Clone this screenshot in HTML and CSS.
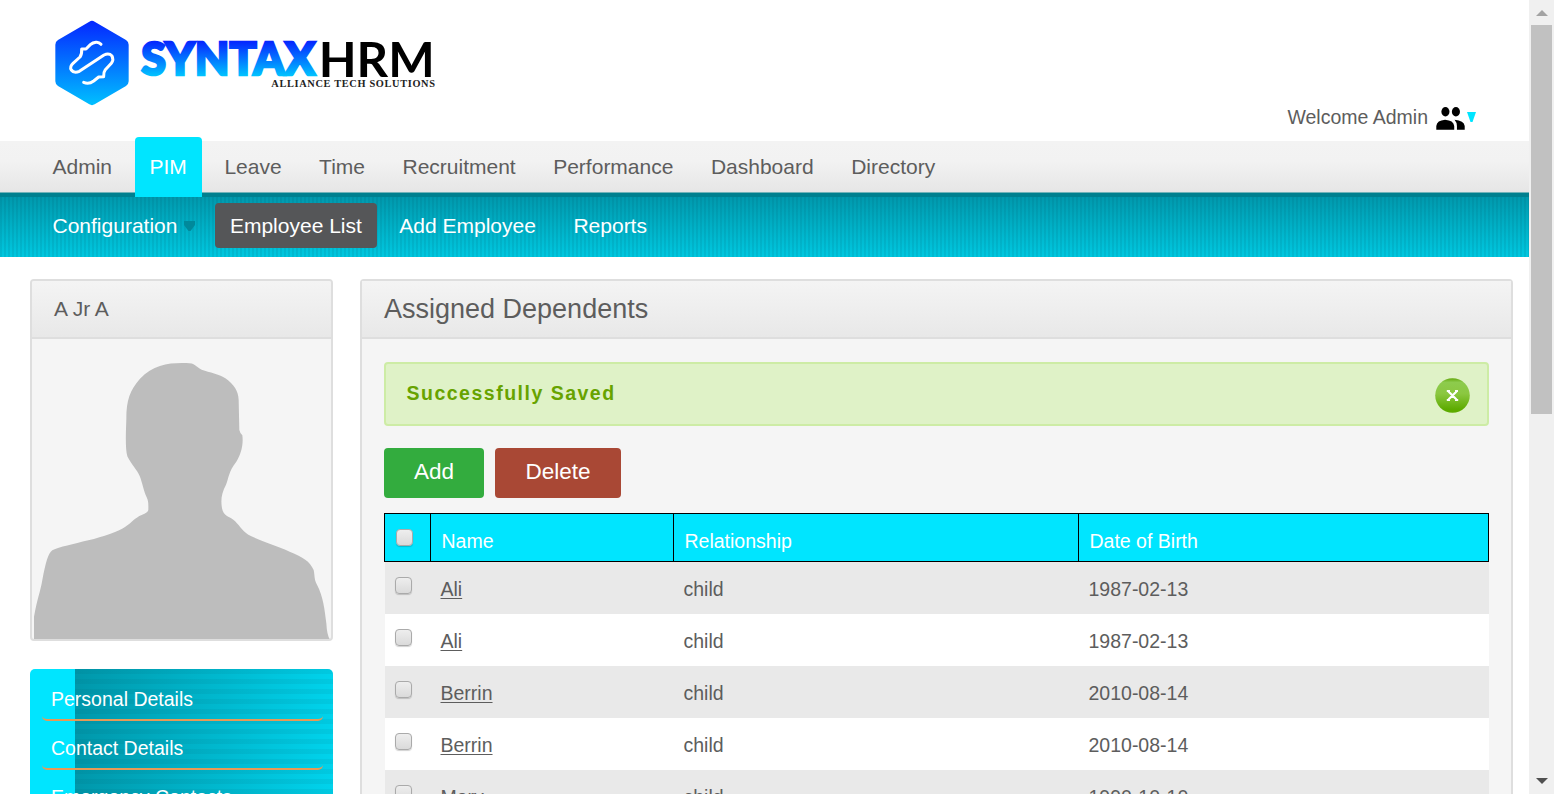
FILE: index.html
```
<!DOCTYPE html>
<html lang="en">
<head>
<meta charset="utf-8">
<title>Assigned Dependents</title>
<link rel="stylesheet" href="styles.css">
</head>
<body>
<div class="page">
  <header class="top">
    <svg class="logo" viewBox="0 0 1230 315" role="img" aria-label="SyntaxHRM">
      <defs>
        <linearGradient id="hex" x1="0" y1="0" x2="0" y2="1"><stop offset="0" stop-color="#0527ff"/><stop offset="1" stop-color="#00c0ff"/></linearGradient>
        <linearGradient id="word" gradientUnits="userSpaceOnUse" x1="0" y1="95" x2="0" y2="200"><stop offset="0" stop-color="#0527ff"/><stop offset="1" stop-color="#00c6ff"/></linearGradient>
      </defs>
      <path fill="url(#hex)" d="M148 35Q156 30 164 35L258 90Q266 95 266 104V214Q266 223 258 228L164 283Q156 288 148 283L54 228Q46 223 46 214V104Q46 95 54 90Z"/>
      <path class="mark" d="M183 103Q177 96 168 97Q158 98 151 104L138 117H125Q126 133 120 141L99 160Q88 170 94 180Q102 191 118 184L192 135Q207 128 216 138Q222 149 214 160L196 179Q190 187 191 200L176 201L161 213Q146 224 131 217"/>
      <text class="word" x="304" y="196" textLength="522" lengthAdjust="spacingAndGlyphs">SYNTAX</text>
      <text class="hrm" x="836" y="200" textLength="348" lengthAdjust="spacingAndGlyphs">HRM</text>
      <text class="tag" x="694" y="232" textLength="491" lengthAdjust="spacing">ALLIANCE TECH SOLUTIONS</text>
    </svg>
    <div class="welcome">
      <span>Welcome Admin</span>
      <svg class="people" viewBox="0 0 84 68"><ellipse cx="27" cy="14" rx="12" ry="14"/><ellipse cx="58" cy="14" rx="12" ry="14"/><path d="M0 67V56Q2 40 26 38Q51 40 53 56V67ZM54 38Q82 41 84 56V67H61V56Q61 46 54 38Z"/></svg>
      <svg class="caret" viewBox="0 0 9 10"><path d="M0 0H9L5.500 10H3.500Z"/></svg>
    </div>
  </header>
  <nav class="menu">
    <a>Admin</a><a class="current">PIM</a><a>Leave</a><a>Time</a><a>Recruitment</a><a>Performance</a><a>Dashboard</a><a>Directory</a>
  </nav>
  <nav class="submenu">
    <a class="drop">Configuration<svg class="arrow" viewBox="0 0 11 10"><path d="M0 0H11V4L6.500 10H4.500L0 4Z"/></svg></a><a class="selected">Employee List</a><a>Add Employee</a><a>Reports</a>
  </nav>
  <main class="content">
    <aside class="side">
      <section class="card">
        <h2>A Jr A</h2>
        <svg class="avatar" viewBox="36 207 900 900"><path d="M42 1107V1040C52 985 61 965 67 930C77 878 84 850 97 841C118 831 160 822 205 811C250 800 295 785 315 771C335 758 345 743 365 735Q384 727 385 720C385 703 386 695 380 682C372 666 366 635 359 618C350 598 336 587 322 559C315 535 318 480 319 447C319 390 330 360 360 326C400 284 446 278 495 279C527 278 525 289 545 299C570 308 596 311 616 325C642 344 655 362 656 390L658 480Q660 489 667 496C671 525 662 555 649 575C624 608 628 620 618 644C604 670 602 690 606 715C611 739 627 739 640 749C655 761 666 781 685 794C715 811 770 827 809 845C850 862 869 873 881 900C885 920 882 928 891 944C910 980 914 1019 919 1060Q921 1096 929 1107Z"/></svg>
      </section>
      <ul class="tabs">
        <li><a>Personal Details</a></li>
        <li><a>Contact Details</a></li>
        <li><a>Emergency Contacts</a></li>
      </ul>
    </aside>
    <section class="panel">
      <h1>Assigned Dependents</h1>
      <div class="inner">
        <div class="message"><span>Successfully Saved</span>
          <svg class="close" viewBox="0 0 35 35"><defs><linearGradient id="ball" x1="0" y1="0" x2="0" y2="1"><stop offset="0" stop-color="#63a80c"/><stop offset=".12" stop-color="#8dcb4d"/><stop offset=".45" stop-color="#8bc740"/><stop offset=".9" stop-color="#5dab00"/></linearGradient></defs><circle cx="17.500" cy="17.500" r="17.300" fill="url(#ball)"/><path d="M13.500 13.500L21.500 21.500M21.500 13.500L13.500 21.500M11.800 13H15M20 13H23M11.800 22H15M20 22H23.200"/></svg>
        </div>
        <div class="buttons"><button class="add">Add</button><button class="delete">Delete</button></div>
        <table class="list">
          <colgroup><col class="c-check"><col class="c-name"><col class="c-rel"><col class="c-date"></colgroup>
          <thead><tr><th><i class="box"></i></th><th>Name</th><th>Relationship</th><th>Date of Birth</th></tr></thead>
          <tbody>
            <tr><td><i class="box"></i></td><td><a>Ali</a></td><td>child</td><td>1987-02-13</td></tr>
            <tr><td><i class="box"></i></td><td><a>Ali</a></td><td>child</td><td>1987-02-13</td></tr>
            <tr><td><i class="box"></i></td><td><a>Berrin</a></td><td>child</td><td>2010-08-14</td></tr>
            <tr><td><i class="box"></i></td><td><a>Berrin</a></td><td>child</td><td>2010-08-14</td></tr>
            <tr><td><i class="box"></i></td><td><a>Mary</a></td><td>child</td><td>1990-10-10</td></tr>
          </tbody>
        </table>
      </div>
    </section>
  </main>
</div>
<div class="scrollbar">
  <svg viewBox="0 0 25 25"><path class="up" d="M7 16H19L13 10Z"/></svg>
  <div class="thumb"></div>
  <svg class="end" viewBox="0 0 25 25"><path d="M7 9H19L13 15Z"/></svg>
</div>
</body>
</html>
```
FILE: styles.css
```
* { box-sizing: border-box; }
body { margin: 0; height: 794px; overflow: hidden; display: flex; background: #fff; color: #5d5d5d; font-family: "Liberation Sans", Arial, sans-serif; font-size: 19.5px; }
.page { width: 1529px; height: 794px; overflow: hidden; }
.top { height: 141px; display: flex; justify-content: space-between; align-items: flex-start; padding: 10px 53px 0 40px; }
.logo { width: 410px; height: 105px; }
.mark { fill: none; stroke: #fff; stroke-width: 9; stroke-linecap: round; stroke-linejoin: round; }
.word { font: 900 138px Lato, sans-serif; fill: url(#word); stroke: url(#word); stroke-width: 8; }
.hrm { font: 700 145px Lato, sans-serif; fill: #000; }
.tag { font: 700 31px "Liberation Serif", serif; fill: #222; }
.welcome { display: flex; align-items: center; margin-top: 94px; height: 26px; white-space: nowrap; }
.people { width: 29px; height: 23px; margin: 2px 2px 0 8px; }
.caret { width: 9px; height: 10px; fill: #00e5ff; }
.menu { height: 51px; display: flex; gap: 7.5px; padding-left: 37.5px; background: linear-gradient(#f3f3f3 0, #f2f2f2 40%, #e6e6e6); font-size: 21px; }
.menu a { height: 51px; padding: 0 15px; line-height: 52px; }
.menu .current { position: relative; z-index: 1; height: 60px; margin-top: -4px; line-height: 60px; background: #00e5ff; color: #fff; border-radius: 4px 4px 0 0; }
.submenu { height: 65px; display: flex; align-items: flex-start; gap: 7.5px; padding: 10px 0 0 37.5px; border-top: 1px solid #72b3b9; color: #fff; font-size: 21px;
  background: linear-gradient(#00808f, #00808f) 0 0 / 100% 4px no-repeat padding-box, repeating-linear-gradient(90deg, rgba(0,70,90,.1) 0 2px, transparent 2px 4px) padding-box, linear-gradient(#0099ad 4px, #00c8e0) padding-box; }
.submenu a { height: 45px; line-height: 46px; padding: 0 15px; border-radius: 4px; }
.submenu .drop { display: flex; align-items: center; padding-right: 12.5px; }
.arrow { width: 11px; height: 10px; margin-left: 6.5px; fill: #00899b; }
.submenu .selected { background: #555658; }
.content { display: flex; align-items: flex-start; gap: 27px; padding: 22px 16px 0 30px; }
.side { width: 303px; }
.card { height: 362px; border: 2px solid #dedede; border-radius: 4px; background: #f5f5f5; overflow: hidden; }
.card h2 { margin: 0; height: 58px; padding-left: 22px; border-bottom: 2px solid #dedede; font-size: 21px; line-height: 56px; font-weight: 400; background: linear-gradient(#f4f4f4, #e8e8e8); }
.avatar { display: block; width: 300px; height: 300px; fill: #bdbdbd; }
.tabs { list-style: none; margin: 28px 0 0; padding: 0 10px 0 12px; height: 440px; border-radius: 5px; color: #fff;
  background: linear-gradient(#00e5ff, #00e5ff) 0 0 / 45px 100% no-repeat, repeating-linear-gradient(rgba(0,80,95,.08) 0 5px, transparent 5px 10px), linear-gradient(90deg, #0097aa 45px, #00d3ec); }
.tabs li { height: 49px; }
.tabs li:first-child { height: 52px; padding-top: 3px; }
.tabs a { display: block; height: 49px; padding: 9px 0 0 9px; line-height: 36px; border-bottom: 2px solid #e79a56; border-radius: 5px; }
.panel { width: 1153px; height: 620px; border: 2px solid #dedede; border-radius: 4px; background: #f5f5f5; }
.panel h1 { margin: 0; height: 58px; padding-left: 22px; border-bottom: 2px solid #dedede; font-size: 27px; line-height: 56px; font-weight: 400; background: linear-gradient(#f4f4f4, #e8e8e8); }
.inner { padding: 23px 22px; }
.message { height: 64px; display: flex; align-items: center; justify-content: space-between; padding: 0 17px 0 20.5px; border: 2px solid #cdeca5; border-radius: 4px; background: #dff2c7; color: #67a300; font-weight: 700; letter-spacing: 1.5px; }
.message span { padding-bottom: 1px; }
.close { width: 35px; height: 35px; margin-top: 2px; fill: none; stroke: #fff; stroke-width: 2.2; }
.close circle { stroke: none; }
.buttons { display: flex; gap: 11px; margin: 22px 0 15px; }
.buttons button { height: 50px; padding: 0 0 2px; border: 0; border-radius: 4px; color: #fff; font: 22.5px "Liberation Sans", Arial, sans-serif; }
.add { width: 100px; background: #33ac3e; }
.delete { width: 126px; background: #a94835; }
.list { width: 1105px; table-layout: fixed; border-collapse: collapse; }
.c-check { width: 46px; }
.c-name { width: 243px; }
.c-rel { width: 405px; }
.list th { height: 48px; padding: 7px 0 0 10.5px; border: 1px solid #000; background: #00e5ff; color: #fff; font-weight: 400; text-align: left; }
.list td { height: 52px; padding: 4px 0 0 10px; }
.list td:first-child { padding-top: 0; }
.list th:first-child { padding-top: 3px; }
.list tbody tr { background: #fff; }
.list tbody tr:nth-child(odd) { background: #e9e9e9; }
.list td a { text-decoration: underline; text-decoration-thickness: 1px; text-underline-offset: 2px; }
.box { display: block; width: 17px; height: 17px; margin-bottom: 4px; border: 1.5px solid #aaa; border-radius: 4px; background: linear-gradient(#eee, #dadada); box-shadow: 0 1px 1px rgba(0,0,0,.18); }
.scrollbar { width: 25px; height: 794px; display: flex; flex-direction: column; background: #f0f0f0; }
.scrollbar svg { width: 25px; height: 25px; fill: #505050; }
.scrollbar .up { fill: #a3a3a3; }
.thumb { width: 21px; height: 389px; margin-left: 2px; background: #c1c1c1; }
.scrollbar .end { margin-top: auto; }
```
